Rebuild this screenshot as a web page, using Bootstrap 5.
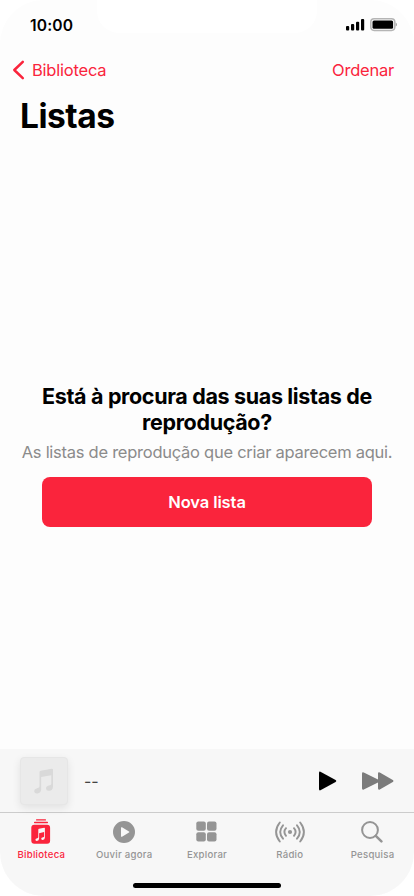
<!DOCTYPE html>
<html lang="pt">
<head>
<meta charset="utf-8">
<meta name="viewport" content="width=device-width, initial-scale=1">
<title>Listas</title>
<link href="https://cdn.jsdelivr.net/npm/bootstrap@5.3.0/dist/css/bootstrap.min.css" rel="stylesheet">
<style>
:root { --accent: #fa243c; }
body { font-family: Inter, sans-serif; background: #fff; color: #000; overflow: hidden; }
svg { display: block; flex: none; }
.phone { width: 414px; height: 896px; background: #fdfdfd; border-radius: 44px; }
.notch { width: 220px; height: 33px; left: 97px; top: 0; background: #fff; border-radius: 0 0 22px 22px; }
.status { height: 50px; padding: 0 17px 0 30px; }
.clock { font-size: 15.6px; font-weight: 600; letter-spacing: .15px; padding-top: 1px; }
.topnav { height: 40px; padding: 0 20px 0 12px; color: var(--accent); }
.topnav a { color: inherit; font-size: 16.5px; letter-spacing: -.22px; }
.page-title { font-size: 33.5px; font-weight: 700; line-height: 40px; padding: 6px 20px 0; letter-spacing: -.5px; }
main { padding-top: 24px; }
.empty-title { font-size: 21.5px; font-weight: 700; line-height: 26px; letter-spacing: -.34px; }
.empty-text { font-size: 16.5px; line-height: 22px; color: #8b8b8b; letter-spacing: -.26px; white-space: nowrap; margin-top: 6px; }
.btn-new { width: 330px; height: 50px; margin-top: 14px; background: var(--accent); color: #fff; border: 0; border-radius: 8px; font-size: 16.5px; font-weight: 600; letter-spacing: -.1px; }
.btn-new span { position: relative; top: 1px; }
.bottom { background: #f7f7f7; border-radius: 0 0 44px 44px; height: 147px; }
.player { height: 64px; border-bottom: 1px solid #ccc; padding: 0 20px; }
.art { width: 48px; height: 48px; background: #ebebeb; border: 1px solid #e6e6e6; border-radius: 4px; box-shadow: 0 3px 8px rgba(0,0,0,.09); }
.track { font-size: 16px; margin-left: 16px; color: #444; }
.tab { width: 82.8px; color: #959595; font-size: 9.6px; font-weight: 500; line-height: 12px; letter-spacing: .26px; white-space: nowrap; }
.tab.active { color: var(--accent); }
.tab-icon { height: 36px; padding-top: 1px; }
.tabs { height: 72px; }
.home-bar { width: 148px; height: 5px; border-radius: 3px; background: #000; margin-left: 133px; margin-top: -2px; }
</style>
</head>
<body>
<div class="phone d-flex flex-column position-relative">
  <div class="notch position-absolute"></div>
  <header class="status d-flex align-items-center justify-content-between position-relative">
    <span class="clock">10:00</span>
    <svg width="52" height="14" viewBox="0 0 52 14">
      <rect x="1" y="8" width="3.2" height="4.500" rx="1"/><rect x="6" y="6" width="3.200" height="6.500" rx="1"/><rect x="11" y="3.700" width="3.200" height="8.800" rx="1"/><rect x="16" y="1" width="3.200" height="11.500" rx="1"/>
      <rect x="25.800" y=".8" width="24" height="11.600" rx="3.300" fill="none" stroke="#b5b5b5" stroke-width="1.500"/><rect x="27.500" y="2.500" width="20.600" height="8.300" rx="1.500"/><path d="M50.600 4.500q1.600 1 1.600 2t-1.600 2z" fill="#aaa"/>
    </svg>
  </header>
  <nav class="topnav d-flex align-items-center justify-content-between">
    <a href="#" class="d-flex align-items-center text-decoration-none"><svg width="20" height="20" viewBox="0 0 20 20" fill="none" stroke="currentColor" stroke-width="2.500" stroke-linecap="round" stroke-linejoin="round"><path d="M10.800 1.800 2.300 10l8.500 8.200"/></svg><span>Biblioteca</span></a>
    <a href="#" class="text-decoration-none">Ordenar</a>
  </nav>
  <h1 class="page-title m-0">Listas</h1>
  <main class="flex-grow-1 d-flex flex-column align-items-center justify-content-center text-center">
    <h2 class="empty-title mb-0">Está à procura das suas listas de<br>reprodução?</h2>
    <p class="empty-text mb-0">As listas de reprodução que criar aparecem aqui.</p>
    <button type="button" class="btn btn-new p-0"><span>Nova lista</span></button>
  </main>
  <footer class="bottom">
    <div class="player d-flex align-items-center">
      <div class="art d-flex align-items-center justify-content-center">
        <svg width="22" height="26" viewBox="0 0 22 26" fill="#d9d9d9"><path d="M6.500 4.200Q6.500 3 7.800 2.700L18.700.7Q20 .5 20 1.700V18.400q0 3.800-3.700 4.400-3.300.4-3.300-2.300 0-2.300 2.900-2.900 2.400-.4 2.400-1.600V7.200L8.200 9.100V21q0 3.800-3.700 4.400Q1.200 25.700 1.200 23q0-2.200 2.900-2.800 2.400-.5 2.400-1.700z"/></svg>
      </div>
      <span class="track me-auto">--</span>
      <svg width="20" height="20" viewBox="0 0 20 20"><path d="M1 2Q1 0 2.900.9L17.600 9q1.600 1 0 2L2.900 19.100Q1 20 1 18z"/></svg>
      <svg class="ms-4" width="32" height="20" viewBox="0 0 32 20" fill="#7b7b7b"><path d="M0 2.700Q0 .8 1.800 1.500L16 8.600V2.700Q16 .8 17.800 1.500L30.800 9q1.300 1 0 2L17.800 18.500Q16 19.200 16 17.300v-5.900L1.800 18.500Q0 19.200 0 17.300z"/></svg>
    </div>
    <div class="tabs d-flex">
      <div class="tab active d-flex flex-column align-items-center">
        <div class="tab-icon d-flex align-items-center"><svg width="20" height="26" viewBox="0 0 20 26" fill="currentColor"><rect x="5" y=".2" width="10" height="1.300" rx=".5"/><rect x="3" y="2.700" width="14" height="1.500" rx=".6"/><path fill-rule="evenodd" d="M3.300 5.700h12.800q3 0 3 3v13q0 3-3 3H3.300q-3 0-3-3v-13q0-3 3-3zM7.300 10.700v7.600q0 .7-1 .9-1.900.3-1.900 1.600 0 1.200 1.500 1.100 2.200-.3 2.200-2.500v-5.200l5-1.100v4.300q0 .7-1 .9-1.900.3-1.900 1.500t1.500 1.100q2.200-.3 2.200-2.400V9.200q0-.6-.7-.5l-5.200 1.100q-.7.200-.7.900z"/></svg></div>
        <span>Biblioteca</span>
      </div>
      <div class="tab d-flex flex-column align-items-center">
        <div class="tab-icon d-flex align-items-center"><svg width="22" height="22" viewBox="0 0 22 22" fill="currentColor"><path fill-rule="evenodd" d="M11 0a11 11 0 1 1 0 22 11 11 0 0 1 0-22zM8 6.800v8.400q0 1 1 .5l7-4.100q.8-.6 0-1.200L9 6.300Q8 5.800 8 6.800z"/></svg></div>
        <span>Ouvir agora</span>
      </div>
      <div class="tab d-flex flex-column align-items-center">
        <div class="tab-icon d-flex align-items-center"><svg width="21" height="21" viewBox="0 0 21 21" fill="currentColor"><rect x=".3" y=".5" width="9.500" height="9.300" rx="2"/><rect x="11" y=".5" width="9.500" height="9.300" rx="2"/><rect x=".3" y="11.200" width="9.500" height="9.300" rx="2"/><rect x="11" y="11.200" width="9.500" height="9.300" rx="2"/></svg></div>
        <span>Explorar</span>
      </div>
      <div class="tab d-flex flex-column align-items-center">
        <div class="tab-icon d-flex align-items-center"><svg width="30" height="22" viewBox="0 0 30 22" fill="none" stroke="currentColor" stroke-width="1.900" stroke-linecap="round"><circle cx="15" cy="11" r="2.100" fill="currentColor" stroke="none"/><path d="M11 7.200q-3.200 3.800 0 7.600M19 7.200q3.200 3.800 0 7.600M8 4.300q-5.600 6.700 0 13.400M22 4.300q5.600 6.700 0 13.400M4.800 1.500q-7.400 9.500 0 19M25.200 1.500q7.400 9.500 0 19"/></svg></div>
        <span>Rádio</span>
      </div>
      <div class="tab d-flex flex-column align-items-center">
        <div class="tab-icon d-flex align-items-center"><svg width="23" height="22" viewBox="0 0 23 22" fill="none" stroke="currentColor" stroke-width="2" stroke-linecap="round"><circle cx="9" cy="9" r="7.900"/><path d="m14.800 14.800 5.600 5.600" stroke-width="2.500"/></svg></div>
        <span>Pesquisa</span>
      </div>
    </div>
    <div class="home-bar"></div>
  </footer>
</div>
<script src="https://cdn.jsdelivr.net/npm/bootstrap@5.3.0/dist/js/bootstrap.bundle.min.js"></script>
</body>
</html>
